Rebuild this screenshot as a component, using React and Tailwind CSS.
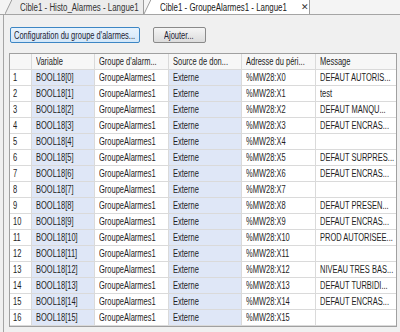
import React from 'react';

const rows = [
  'DEFAUT AUTORIS...',
  'test',
  'DEFAUT MANQU...',
  'DEFAUT ENCRAS...',
  '',
  'DEFAUT SURPRES...',
  'DEFAUT ENCRAS...',
  '',
  'DEFAUT PRESEN...',
  'DEFAUT ENCRAS...',
  'PROD AUTORISEE...',
  '',
  'NIVEAU TRES BAS...',
  'DEFAUT TURBIDI...',
  'DEFAUT ENCRAS...',
  '',
];

// narrow text, the screenshot glyphs are squeezed horizontally
function T({ children }) {
  return <span className="inline-block origin-left scale-x-[0.75] whitespace-nowrap">{children}</span>;
}

function Cell({ children, blue, last }) {
  return (
    <div
      className={
        'h-[16px] flex items-center pl-[4px] overflow-hidden border-b border-[#dadada] ' +
        (last ? '' : 'border-r ') +
        (blue ? 'bg-[#dfe7f7]' : 'bg-white')
      }
    >
      <T>{children}</T>
    </div>
  );
}

function Tab({ label, active }) {
  const fill = active ? '#ffffff' : '#ececec';
  return (
    <div className="flex items-end h-[15px]">
      <svg width="8" height="15" viewBox="0 0 8 15" className="block">
        <polygon points="0,15 7,0.5 8,0.5 8,15" fill={fill} />
        <line x1="0" y1="15" x2="7" y2="0.5" stroke="#9c9c9c" strokeWidth="1" />
      </svg>
      <div
        className={
          'h-[15px] flex items-center border-t border-r border-[#9c9c9c] ' +
          (active ? 'bg-white w-[158px] pl-[8px] text-[#1a1a1a]' : 'bg-[#ececec] w-[131px] pl-[7px] text-[#333]')
        }
      >
        <div className={active ? 'w-[133px]' : 'w-[118px]'}>
          <span className="inline-block origin-left scale-x-[0.79] whitespace-nowrap">{label}</span>
        </div>
        {active && <span className="ml-[8px] text-[9px] leading-none text-[#333]">✕</span>}
      </div>
    </div>
  );
}

export default function App() {
  return (
    <div className="w-[400px] h-[332px] bg-[#f0f0f0] overflow-hidden font-['Liberation_Sans',Arial,sans-serif] text-[10px] text-[#222233]">
      {/* tabs */}
      <div className="h-[15px] flex items-end pl-[5px] border-b border-[#a5a5a5] bg-[#f4f4f4]">
        <Tab label="Cible1 - Histo_Alarmes - Langue1" />
        <Tab label="Cible1 - GroupeAlarmes1 - Langue1" active />
      </div>

      <div className="ml-[3px] h-[317px] border-l border-[#a5a5a5] flex flex-col">
        {/* buttons */}
        <div className="flex gap-[13px] pt-[12px] pl-[6px]">
          <div className="w-[130px] h-[16px] flex items-center pl-[3px] rounded-[2px] border border-[#3d86c4] bg-gradient-to-b from-[#e8f3fd] to-[#d3e7f9]">
            <T>Configuration du groupe d'alarmes...</T>
          </div>
          <div className="w-[53px] h-[16px] flex items-center pl-[10px] rounded-[2px] border border-[#8a8a8a] bg-gradient-to-b from-[#f5f5f5] to-[#dcdcdc]">
            <T>Ajouter...</T>
          </div>
        </div>

        {/* table */}
        <div className="mt-[10px] ml-[5px] w-[388px] border border-[#a0a0a0] bg-white">
          <div className="grid grid-cols-[22px_63px_74px_73px_74px_80px] text-[#1e1e1e]">
            <div className="h-[16px] border-r border-b border-[#dadada] bg-[#f7f7f7]" />
            {['Variable', "Groupe d'alarm...", 'Source de don...', 'Adresse du péri...', 'Message'].map((h, i) => (
              <div
                key={h}
                className={
                  'h-[16px] flex items-center pl-[4px] overflow-hidden border-b border-[#dadada] bg-[#f7f7f7] ' +
                  (i < 4 ? 'border-r' : '')
                }
              >
                <T>{h}</T>
              </div>
            ))}

            {rows.map((msg, i) => (
              <React.Fragment key={i}>
                <div className="h-[16px] flex items-center pl-[3px] border-r border-b border-[#dadada] bg-white">
                  <T>{i + 1}</T>
                </div>
                <Cell blue>{`BOOL18[${i}]`}</Cell>
                <Cell>GroupeAlarmes1</Cell>
                <Cell blue>Externe</Cell>
                <Cell>{`%MW28:X${i}`}</Cell>
                <Cell last>{msg}</Cell>
              </React.Fragment>
            ))}
          </div>
        </div>
      </div>
    </div>
  );
}
